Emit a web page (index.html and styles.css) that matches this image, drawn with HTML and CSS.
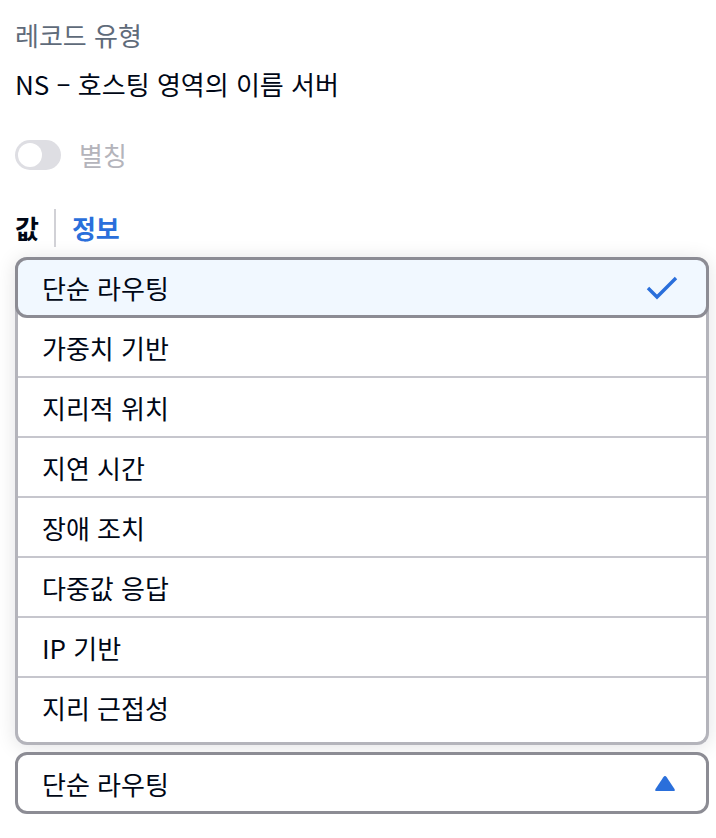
FILE: index.html
```html
<!DOCTYPE html>
<html lang="ko">
<head>
<meta charset="utf-8">
<link rel="stylesheet" href="styles.css">
</head>
<body>
<div class="label">레코드 유형</div>
<div class="value">NS – 호스팅 영역의 이름 서버</div>
<div class="toggle-row">
  <span class="toggle"><span class="knob"></span></span>
  <span class="toggle-text">별칭</span>
</div>
<div class="tabs">
  <span class="tab active">값</span>
  <span class="tab-sep"></span>
  <span class="tab link">정보</span>
</div>
<div class="dropdown">
  <ul class="list">
    <li class="option selected">
      <span>단순 라우팅</span>
      <svg class="check" width="34" height="28" viewBox="0 0 34 28"><polyline points="2,14 11,23 30,4" fill="none" stroke="#2a6fdb" stroke-width="3.4" stroke-linejoin="miter" stroke-linecap="butt"/></svg>
    </li>
    <li class="option">가중치 기반</li>
    <li class="option">지리적 위치</li>
    <li class="option">지연 시간</li>
    <li class="option">장애 조치</li>
    <li class="option">다중값 응답</li>
    <li class="option">IP 기반</li>
    <li class="option last">지리 근접성</li>
  </ul>
  <div class="trigger">
    <span>단순 라우팅</span>
    <svg class="caret" width="22" height="17" viewBox="0 0 22 17"><path d="M9.3 2.2 Q11 0 12.7 2.2 L20.5 14 Q21.5 16 19.5 16 L2.5 16 Q0.5 16 1.5 14 Z" fill="#2a6fdb"/></svg>
  </div>
</div>
</body>
</html>
```
FILE: styles.css
```css
html, body {
  margin: 0;
  padding: 0;
  background: #ffffff;
}
body {
  padding: 0 7px 0 15px;
  font-family: "Noto Sans CJK KR", "Noto Sans", sans-serif;
  font-size: 26px;
  color: #000716;
}
.label {
  padding-top: 18px;
  line-height: 34px;
  color: #5f6b7a;
}
.value {
  margin-top: 15px;
  line-height: 34px;
  color: #000716;
}
.toggle-row {
  margin-top: 38px;
  height: 32px;
  display: flex;
  align-items: center;
  gap: 18px;
}
.toggle {
  width: 46px;
  height: 30px;
  border-radius: 15px;
  background: #dedee3;
  display: flex;
  align-items: center;
  padding-left: 3px;
  box-sizing: border-box;
}
.knob {
  width: 24px;
  height: 24px;
  border-radius: 50%;
  background: #ffffff;
}
.toggle-text {
  color: #b4b4bb;
  line-height: 32px;
}
.tabs {
  margin-top: 38px;
  height: 38px;
  display: flex;
  align-items: center;
}
.tab {
  font-weight: 700;
  line-height: 34px;
}
.tab-sep {
  width: 2px;
  height: 38px;
  background: #d1d1d6;
  margin: 0 16px 0 15px;
}
.tab.link {
  color: #2a6fdb;
}
.dropdown {
  margin-top: 10px;
}
.list {
  list-style: none;
  margin: 0;
  padding: 0;
  border: 3px solid #b4b4bb;
  border-top: 0;
  border-radius: 12px;
  box-shadow: 0 2px 20px rgba(0, 7, 22, 0.12);
  background: #ffffff;
}
.option {
  height: 58px;
  border-bottom: 2px solid #c6c6cd;
  display: flex;
  align-items: center;
  padding: 0 24px;
}
.option.last {
  border-bottom: 0;
  height: 58px;
  margin-bottom: 6px;
}
.option.selected {
  margin: 0 -3px;
  height: 55px;
  border: 3px solid #8c8c94;
  border-radius: 12px;
  background: #f1f8ff;
  padding: 0 26px 0 24px;
  justify-content: space-between;
}
.check {
  display: block;
}
.trigger {
  margin-top: 7px;
  height: 56px;
  border: 3px solid #8c8c94;
  border-radius: 12px;
  display: flex;
  align-items: center;
  justify-content: space-between;
  padding: 0 30px 0 24px;
  background: #ffffff;
}
.caret {
  display: block;
}
```
